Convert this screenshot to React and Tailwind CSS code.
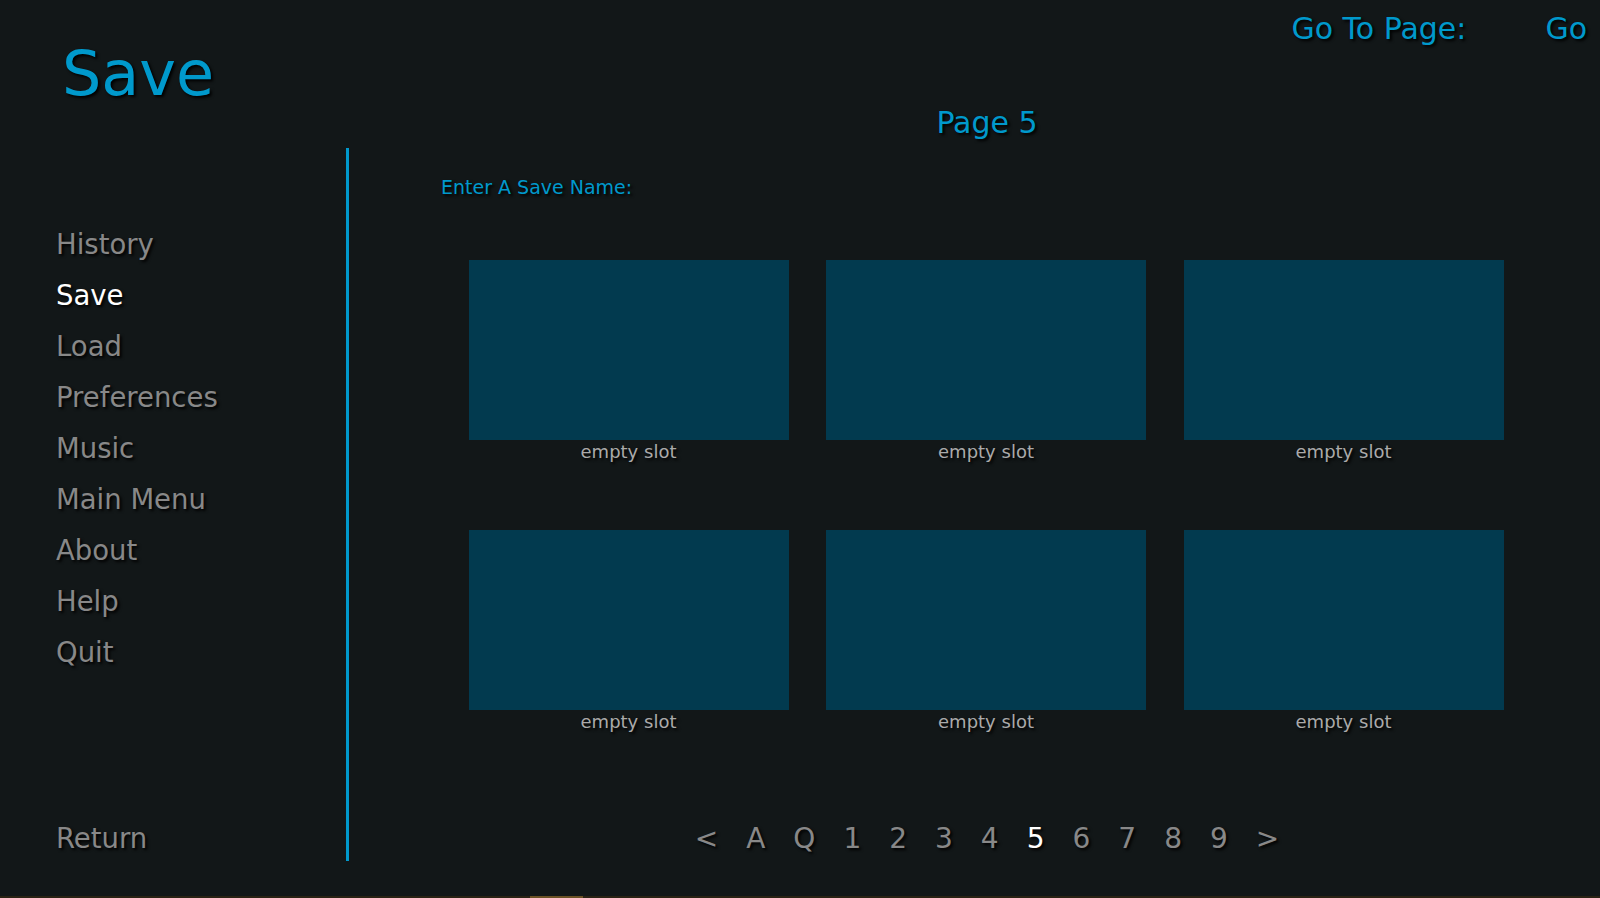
import React from "react";

const shadow = "[text-shadow:2px_2px_3px_#000]";

const navItems = ["History", "Save", "Load", "Preferences", "Music", "Main Menu", "About", "Help", "Quit"];
const pages = ["<", "A", "Q", "1", "2", "3", "4", "5", "6", "7", "8", "9", ">"];

function Slot() {
  return (
    <div className="flex flex-col">
      <div className="h-[180px] w-[320px] bg-[#023a4f]" />
      <div className={`mt-[3px] text-center text-[18px] leading-none text-[#aaaaaa] ${shadow}`}>empty slot</div>
    </div>
  );
}

export default function App() {
  return (
    <div
      className="flex h-[898px] w-[1600px] flex-col overflow-hidden bg-[#121718]"
      style={{ fontFamily: '"DejaVu Sans", Verdana, sans-serif' }}
    >
      <div className="flex h-[896px]">
        {/* Left column */}
        <div className="flex w-[349px] flex-col">
          <div className="h-[148px] pl-[62px] pt-[43px]">
            <div className={`text-[62px] leading-none text-[#0099cc] ${shadow}`}>Save</div>
          </div>
          <div className="flex">
            <div className="flex w-[346px] flex-col pl-[56px] pt-[71px]">
              {navItems.map((item) => (
                <div
                  key={item}
                  className={`h-[51px] text-[27.5px] leading-[51px] ${shadow} ${
                    item === "Save" ? "text-white" : "text-[#888888]"
                  }`}
                >
                  {item}
                </div>
              ))}
              <div className={`mt-[135px] h-[51px] text-[27.5px] leading-[51px] text-[#888888] ${shadow}`}>Return</div>
            </div>
            <div className="h-[713px] w-[3px] self-start bg-[#0099cc]" />
          </div>
        </div>

        {/* Right column */}
        <div className="flex flex-1 flex-col pl-[25px]">
          <div className={`flex justify-end gap-[79px] pr-[13px] pt-[14px] text-[30px] leading-none text-[#0099cc] ${shadow}`}>
            <span>Go To Page:</span>
            <span>Go</span>
          </div>
          <div className={`mt-[64px] text-center text-[30px] leading-none text-[#0099cc] ${shadow}`}>Page 5</div>
          <div className={`mt-[40px] pl-[67px] text-[19px] leading-none text-[#0099cc] ${shadow}`}>Enter A Save Name:</div>
          <div className="mx-auto mt-[63px] grid w-[1035px] -translate-x-[1px] grid-cols-3 gap-x-[37.5px] gap-y-[69px]">
            {Array.from({ length: 6 }).map((_, i) => (
              <Slot key={i} />
            ))}
          </div>
          <div className="mt-[94px] flex justify-center">
            {pages.map((p) => (
              <span
                key={p}
                className={`px-[14px] text-[28px] leading-none ${shadow} ${
                  p === "5" ? "text-white" : "text-[#888888]"
                }`}
              >
                {p}
              </span>
            ))}
          </div>
        </div>
      </div>
      <div className="flex h-[2px] bg-[#2a2314]">
        <div className="ml-[530px] h-[2px] w-[53px] bg-[#6b5225]" />
      </div>
    </div>
  );
}
